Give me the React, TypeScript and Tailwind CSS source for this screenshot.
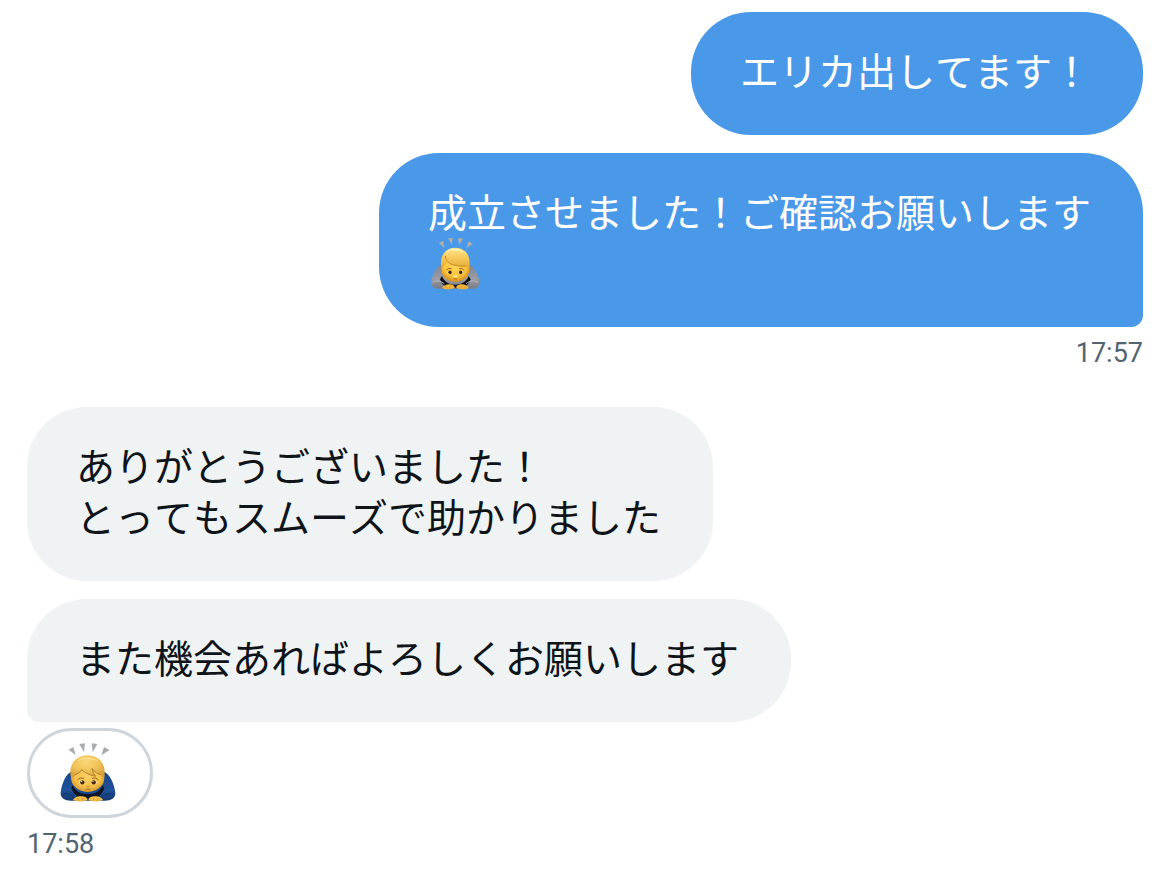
import type { ReactNode } from 'react';

function BowingPersonGrey() {
  return (
    <svg role="img" aria-label="bowing person" viewBox="24 21 162 159" className="block h-[53px] w-[54px] shrink-0">
      <defs>
        <radialGradient id="g-face" cx="0.5" cy="0.4" r="0.62">
          <stop offset="0" stopColor="#ffd65a" />
          <stop offset="0.65" stopColor="#f9c43c" />
          <stop offset="1" stopColor="#d28c14" />
        </radialGradient>
        <linearGradient id="g-hair" x1="0" y1="0" x2="0" y2="1">
          <stop offset="0" stopColor="#ffe894" />
          <stop offset="0.4" stopColor="#f8d062" />
          <stop offset="1" stopColor="#e3ab36" />
        </linearGradient>
        <linearGradient id="g-sleeve" x1="0" y1="0" x2="0" y2="1">
          <stop offset="0" stopColor="#7f8391" />
          <stop offset="0.6" stopColor="#9a9ca6" />
          <stop offset="1" stopColor="#777a84" />
        </linearGradient>
      </defs>
      <g fill="#b0aea9">
        <path d="M56 38 69 33 74 54Z" />
        <path d="M84 25 98 24 95 44Z" />
        <path d="M114 24 129 26 117 44Z" />
        <path d="M146 34 158 41 139 55Z" />
      </g>
      <path d="M66 101C47 111 34 141 33 160C34 173 50 178 68 176H146C164 178 178 173 179 160C178 141 166 112 146 102Z" fill="url(#g-sleeve)" />
      <path d="M66 138C72 154 84 163 105 164C127 163 140 154 146 138L152 148C149 158 143 165 134 170L105 173L78 170C69 165 62 158 60 148Z" fill="#101014" />
      <path d="M38 157C48 149 62 152 73 161M174 157C163 149 150 152 138 161" fill="none" stroke="#b8b9c1" strokeWidth="3" />
      <path d="M66 92C62 110 63 128 72 140C80 150 92 155 105 155C118 155 132 150 140 140C149 128 150 109 145 92L130 74H80Z" fill="url(#g-face)" />
      <path d="M64 113C60 89 67 69 82 60C97 50 119 51 133 62C147 72 151 92 147 113C144 115 141 111 140 108C113 113 91 103 80 92C76 102 71 110 64 113Z" fill="url(#g-hair)" />
      <path d="M76 78C77 97 94 111 140 108" fill="none" stroke="#b9801f" strokeWidth="2.5" />
      <path d="M76 68C88 52 120 52 135 70C118 60 94 59 76 68Z" fill="#fff3b8" opacity="0.8" />
      <ellipse cx="89" cy="127" rx="7" ry="5" fill="#f5dca0" />
      <ellipse cx="123" cy="127" rx="7" ry="5" fill="#f5dca0" />
      <ellipse cx="90" cy="127" rx="5" ry="5.5" fill="#3f2206" />
      <ellipse cx="122" cy="127" rx="5" ry="5.5" fill="#3f2206" />
      <path d="M79 120Q87 113 95 116M117 116Q125 113 133 120" fill="none" stroke="#a06a14" strokeWidth="3" />
      <path d="M102 138Q106 141 110 138" fill="none" stroke="#ffeaa2" strokeWidth="5" strokeLinecap="round" />
      <path d="M101 147H111" stroke="#a8640f" strokeWidth="2.5" />
      <path d="M66 174C71 165 81 162 91 163C99 164 105 168 104 174C92 179 76 179 66 174ZM146 174C142 165 132 162 122 163C113 164 108 168 109 174C121 179 137 179 146 174Z" fill="#f2b63a" />
      <path d="M76 169 81 176M89 168 91 177M137 169 132 176M124 168 122 177" stroke="#c98a20" strokeWidth="2" />
    </svg>
  );
}

function BowingPersonBlue() {
  return (
    <svg role="img" aria-label="bowing person" viewBox="42 24 186 180" className="block h-[60px] w-[62px]">
      <defs>
        <radialGradient id="b-face" cx="0.5" cy="0.45" r="0.6">
          <stop offset="0" stopColor="#fbd064" />
          <stop offset="0.65" stopColor="#f3c04a" />
          <stop offset="1" stopColor="#cf8d20" />
        </radialGradient>
        <radialGradient id="b-hair" cx="0.45" cy="0.3" r="0.75">
          <stop offset="0" stopColor="#fbd878" />
          <stop offset="0.55" stopColor="#eec055" />
          <stop offset="1" stopColor="#d49c36" />
        </radialGradient>
        <linearGradient id="b-sleeve" x1="0" y1="0" x2="0" y2="1">
          <stop offset="0" stopColor="#1b4787" />
          <stop offset="0.6" stopColor="#1d509a" />
          <stop offset="1" stopColor="#143a70" />
        </linearGradient>
      </defs>
      <g fill="#a9abad">
        <path d="M71 44 85 36 92 60Z" />
        <path d="M103 27 120 25 117 52Z" />
        <path d="M140 25 157 27 143 52Z" />
        <path d="M177 36 194 45 169 61Z" />
      </g>
      <path d="M84 109C62 113 49 150 47 174C46 190 62 199 84 197H174C196 199 212 190 211 174C208 148 195 114 172 109Z" fill="url(#b-sleeve)" />
      <path d="M53 168C66 158 82 165 92 182M204 168C191 158 175 165 165 182" fill="none" stroke="#2a5da6" strokeWidth="2.5" />
      <path d="M51 181C62 172 77 176 88 187M206 181C195 172 180 176 169 187" fill="none" stroke="#0f2e5c" strokeWidth="2" />
      <path d="M83 150C92 170 105 177 128 178C151 177 165 170 173 150L178 160C173 177 160 187 145 190H113C98 187 84 177 79 160Z" fill="#0e1626" />
      <path d="M80 104C75 124 78 143 88 154C98 165 113 171 128 171C143 171 158 165 168 154C179 143 181 124 175 104L157 82H98Z" fill="url(#b-face)" />
      <path d="M78 127C72 103 80 80 98 69C115 58 141 58 157 69C176 81 183 104 177 127C174 131 171 127 168 119C158 118 149 111 141 100C143 111 148 119 152 124C134 121 119 113 110 104C103 116 91 118 87 122C85 129 82 131 78 127Z" fill="url(#b-hair)" />
      <path d="M88 121C95 116 105 114 110 104C119 113 134 121 152 124C147 117 143 111 141 100C149 111 158 118 168 119" fill="none" stroke="#a87328" strokeWidth="2.5" />
      <path d="M96 79C110 63 143 63 160 79C140 71 115 71 96 79Z" fill="#fff0ab" opacity="0.55" />
      <ellipse cx="111" cy="142" rx="9" ry="6" fill="#f4dca6" />
      <ellipse cx="147" cy="142" rx="9" ry="6" fill="#f4dca6" />
      <circle cx="112" cy="142" r="6.5" fill="#4b2d0c" />
      <circle cx="146" cy="142" r="6.5" fill="#4b2d0c" />
      <circle cx="110" cy="139" r="1.8" fill="#fff" />
      <circle cx="144" cy="139" r="1.8" fill="#fff" />
      <path d="M98 134Q107 126 117 130M141 130Q151 126 160 134" fill="none" stroke="#9e6618" strokeWidth="3" />
      <path d="M124 154Q129 157 134 154" fill="none" stroke="#ca8926" strokeWidth="3" />
      <path d="M122 163Q129 161 136 163" fill="none" stroke="#9c5a1c" strokeWidth="2.5" />
      <path d="M84 195C89 185 100 182 112 184C121 185 128 189 127 196C113 201 96 200 84 195ZM174 195C169 185 158 182 146 184C137 185 130 189 131 196C145 201 162 200 174 195Z" fill="#f5be48" />
      <path d="M98 190 103 198M111 189 114 199M160 190 155 198M147 189 144 199" stroke="#c38526" strokeWidth="2" />
    </svg>
  );
}

type BubbleProps = { mine?: boolean; tail?: boolean; children: ReactNode };

function Bubble({ mine = false, tail = false, children }: BubbleProps) {
  const tone = mine ? 'bg-[#4a99e9] text-white' : 'bg-[#eff3f4] text-[#0f1419]';
  const corner = tail ? (mine ? 'rounded-br-xl' : 'rounded-bl-xl') : '';
  return (
    <div
      className={`max-w-full rounded-[60px] pt-[35px] pr-[52px] pb-[37px] pl-[49px] text-[39px] leading-[51px] [font-kerning:none] ${tone} ${corner}`}
    >
      {children}
    </div>
  );
}

export default function App() {
  return (
    <main className="flex min-h-screen flex-col bg-white px-[27px] py-3 font-['Liberation_Sans','Noto_Sans_CJK_JP',sans-serif]">
      <section className="flex flex-col items-end">
        <div className="flex max-w-full flex-col items-end gap-[18px]">
          <Bubble mine>
            <p>エリカ出してます！</p>
          </Bubble>
          <Bubble mine tail>
            <p>成立させました！ご確認お願いします</p>
            <div className="flex h-[51px] items-end">
              <BowingPersonGrey />
            </div>
          </Bubble>
        </div>
        <time className="mt-2.5 font-['Roboto',sans-serif] text-[27px] leading-8 text-[#536471]">17:57</time>
      </section>

      <section className="mt-[38px] flex flex-col items-start">
        <div className="flex max-w-full flex-col items-start gap-[18px]">
          <Bubble>
            <p>ありがとうございました！</p>
            <p>とってもスムーズで助かりました</p>
          </Bubble>
          <Bubble tail>
            <p>また機会あればよろしくお願いします</p>
          </Bubble>
        </div>
        <button
          type="button"
          aria-label="bowing person reaction"
          className="mt-1.5 flex h-[90px] w-[126px] items-center justify-center rounded-full border-3 border-[#cfd6db] bg-white"
        >
          <BowingPersonBlue />
        </button>
        <time className="mt-2.5 font-['Roboto',sans-serif] text-[27px] leading-8 text-[#536471]">17:58</time>
      </section>
    </main>
  );
}
